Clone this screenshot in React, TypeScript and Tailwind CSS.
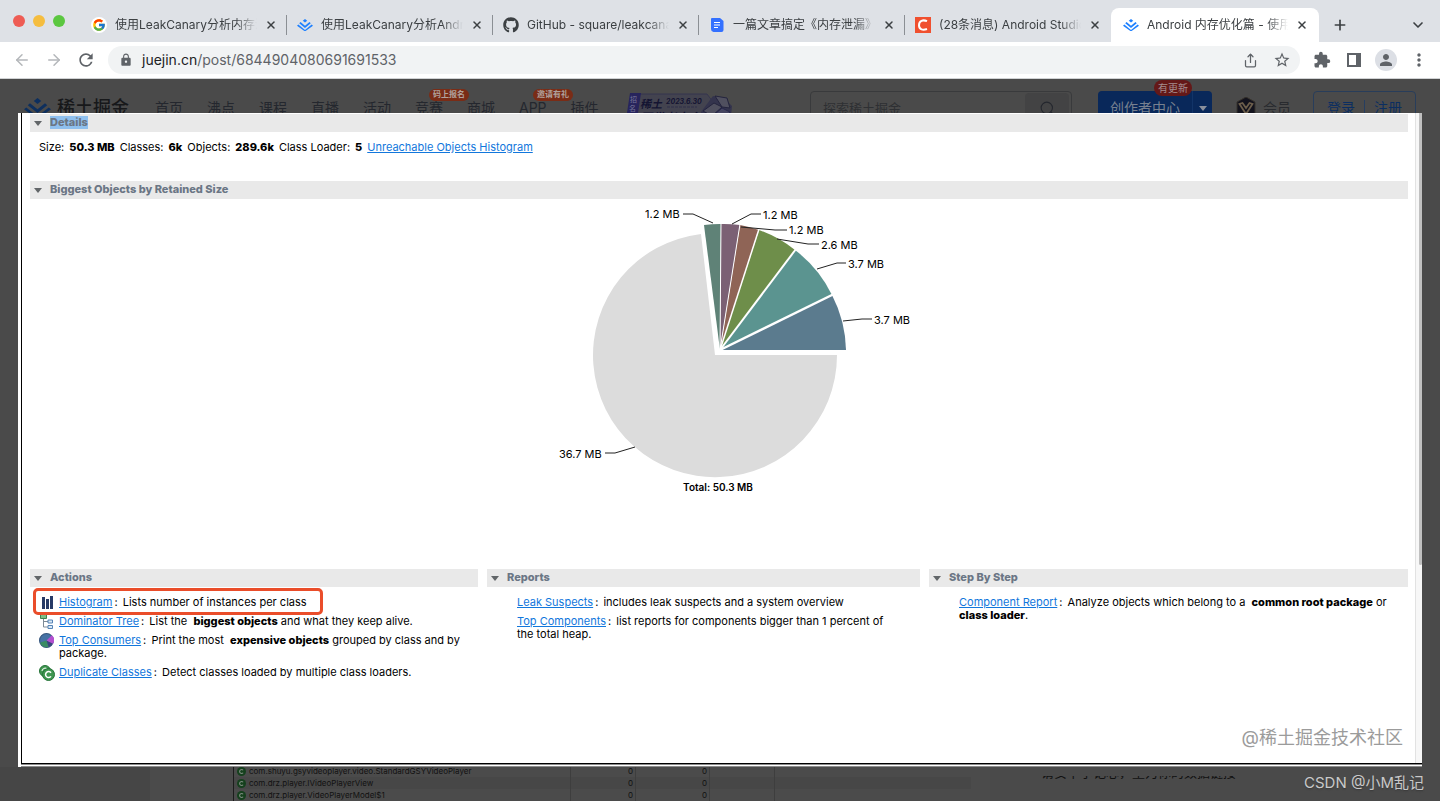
import type { ReactNode } from 'react'
import { ArrowLeft, ArrowRight, ChevronDown, Plus, Search, Share, X } from 'lucide-react'
import { FaGithub } from 'react-icons/fa'
import { FcGoogle } from 'react-icons/fc'
import { MdExtension, MdLock, MdMoreVert, MdPerson, MdRefresh, MdStarBorder } from 'react-icons/md'

function JuejinMark({ className, color }: { className: string; color: string }) {
  return (
    <svg viewBox="0 0 36 28" className={className} fill={color}>
      <path d="M18 0l5 4-5 4-5-4z" />
      <path d="M8 7l10 8 10-8 3 2.500L18 20 5 9.500z" />
      <path d="M3 12.500l15 12 15-12 3 2.500L18 28 0 15z" />
    </svg>
  )
}

function DocMark() {
  return (
    <svg viewBox="0 0 16 16" className="size-4 shrink-0">
      <path d="M3 1h8l3.500 3v9a2 2 0 0 1-2 2H4.500A3 3 0 0 1 2 12V2a1 1 0 0 1 1-1z" fill="#3370ff" />
      <path d="M5 5.500h6M5 8h6M5 10.500h4" stroke="#fff" strokeWidth="1" />
    </svg>
  )
}

function CsdnMark() {
  return (
    <svg viewBox="0 0 16 16" className="size-4 shrink-0">
      <rect width="16" height="16" fill="#f0502f" />
      <path d="M12 4.200C8 2.400 4 3.600 4 8.300c0 4.500 4 5.200 8 3.700" fill="none" stroke="#fff" strokeWidth="2" />
    </svg>
  )
}

const tabs: { title: string; icon: ReactNode; active?: boolean }[] = [
  {
    title: '使用LeakCanary分析内存泄漏',
    icon: (
      <span className="flex size-4 shrink-0 items-center justify-center rounded-full bg-white">
        <FcGoogle size={14} />
      </span>
    ),
  },
  { title: '使用LeakCanary分析Android', icon: <JuejinMark className="w-4 shrink-0" color="#1e80ff" /> },
  { title: 'GitHub - square/leakcanary', icon: <FaGithub size={16} className="shrink-0" /> },
  { title: '一篇文章搞定《内存泄漏》', icon: <DocMark /> },
  { title: '(28条消息) Android Studio', icon: <CsdnMark /> },
  {
    title: 'Android 内存优化篇 - 使用 LeakCanary',
    icon: <JuejinMark className="w-4 shrink-0" color="#1e80ff" />,
    active: true,
  },
]

function TabStrip() {
  return (
    <div className="flex h-[42px] items-end bg-[#dee1e6] text-[#3c4043]">
      <div className="flex w-[81px] shrink-0 gap-2 self-center pl-[13px]">
        <span className="size-3 rounded-full bg-[#ee5c54]" />
        <span className="size-3 rounded-full bg-[#f5bd3f]" />
        <span className="size-3 rounded-full bg-[#5bc740]" />
      </div>
      {tabs.map((tab, i) => (
        <div
          key={tab.title}
          className={
            tab.active
              ? 'flex h-[34px] min-w-0 max-w-[208px] flex-1 items-center rounded-t-lg bg-white pl-3 pr-[9px]'
              : 'flex h-[34px] min-w-0 max-w-[206px] flex-1 items-center pl-[10px]'
          }
        >
          {tab.icon}
          <span className="ml-2 min-w-0 flex-1 overflow-hidden whitespace-nowrap text-xs mask-r-from-85% mask-r-to-100%">
            {tab.title}
          </span>
          <button aria-label="Close tab" className="ml-[6px] flex size-4 shrink-0 items-center justify-center">
            <X size={12} strokeWidth={3} />
          </button>
          {i < 4 && <span className="ml-[7px] h-5 w-px bg-[#8b8f94]" />}
          {i === 4 && <span className="ml-[7px] w-px" />}
        </div>
      ))}
      <button aria-label="New tab" className="ml-[13px] mb-[9px]">
        <Plus size={16} strokeWidth={2.5} />
      </button>
      <button aria-label="Search tabs" className="ml-auto mr-[14px] mb-[9px]">
        <ChevronDown size={16} strokeWidth={2.5} />
      </button>
    </div>
  )
}

function Toolbar() {
  return (
    <div className="flex h-[37px] items-center border-b border-[#d0d2d4] bg-white pl-[13px] pr-[11px] text-[#5f6368]">
      <button aria-label="Back" className="text-[#b4b7ba]">
        <ArrowLeft size={18} />
      </button>
      <button aria-label="Forward" className="ml-[14px] text-[#b4b7ba]">
        <ArrowRight size={18} />
      </button>
      <button aria-label="Reload" className="ml-[13px]">
        <MdRefresh size={20} />
      </button>
      <div className="ml-3 flex h-7 flex-1 items-center rounded-full bg-[#f1f3f4] pl-[11px] pr-[9px]">
        <MdLock size={14} />
        <a href="https://juejin.cn/post/6844904080691691533" className="ml-[9px] flex-1 text-sm">
          <span className="text-[#202124]">juejin.cn</span>/post/6844904080691691533
        </a>
        <button aria-label="Share">
          <Share size={15} />
        </button>
        <button aria-label="Bookmark" className="ml-[15px]">
          <MdStarBorder size={18} />
        </button>
      </div>
      <button aria-label="Extensions" className="ml-[13px]">
        <MdExtension size={18} />
      </button>
      <button aria-label="Side panel" className="ml-4">
        <span className="block h-[14px] w-[14px] border-2 border-r-[5px] border-[#5f6368]" />
      </button>
      <button
        aria-label="Profile"
        className="ml-[14px] flex size-[22px] items-center justify-center rounded-full bg-[#dcdfe5]"
      >
        <MdPerson size={18} />
      </button>
      <button aria-label="Menu" className="ml-3">
        <MdMoreVert size={20} />
      </button>
    </div>
  )
}

const navItems = [
  { label: '首页' },
  { label: '沸点' },
  { label: '课程' },
  { label: '直播' },
  { label: '活动' },
  { label: '竞赛', badge: '码上报名' },
  { label: '商城' },
  { label: 'APP', badge: '邀请有礼' },
  { label: '插件' },
]

function EventBanner() {
  return (
    <svg viewBox="0 0 110 36" className="ml-[26px] h-9 w-[110px] shrink-0">
      <path d="M6 4h76l6 8v24H2z" fill="#43434f" stroke="#35354f" />
      <path d="M5 3h11l-5 33H0z" fill="#27245c" />
      <text x="5" y="12" fontSize="7" fill="#77779a">招</text>
      <text x="4" y="21" fontSize="7" fill="#77779a">名</text>
      <text x="3" y="30" fontSize="7" fill="#77779a">中</text>
      <text x="15" y="18" fontSize="11" fontWeight="700" fontStyle="italic" fill="#141432">稀土</text>
      <text x="41" y="14" fontSize="7" fontWeight="700" fontStyle="italic" fill="#141432">2023.6.30</text>
      <path d="M42 17h30" stroke="#30304a" strokeDasharray="3 1" />
      <text x="15" y="32" fontSize="12" fontWeight="700" fontStyle="italic" fill="#141432">开发者大会</text>
      <path d="M76 22l12-16 12 3 7 7-2 20H78z" fill="#34344d" />
      <path d="M78 21l11-8 8 4-10 9zM90 6l12 2 3 10-8-1z" fill="#50505f" stroke="#24243e" />
      <path d="M83 30l14-12 8 4-6 14H84z" fill="#454560" stroke="#27274b" />
    </svg>
  )
}

// Site header behind the lightbox: dimmed, and cut off where the image starts.
function SiteHeader() {
  return (
    <div className="h-[34px] overflow-hidden text-[#24272e]">
      <header className="flex h-[58px] items-center pl-[24px] pr-6 text-sm">
        <JuejinMark className="w-[27px] shrink-0" color="#0d2f5e" />
        <span className="ml-[6px] whitespace-nowrap text-[18px] leading-6 font-medium text-[#17181a]">稀土掘金</span>
        <nav className="ml-[26px] flex gap-6">
          {navItems.map((item) => (
            <a key={item.label} href="#" className="relative whitespace-nowrap">
              {item.label}
              {item.badge && (
                <span className="absolute bottom-[17px] left-[14px] flex h-3 items-center rounded-full bg-[#7a2c16] px-1 text-[8px] font-bold text-[#b0a19c]">
                  {item.badge}
                </span>
              )}
            </a>
          ))}
        </nav>
        <EventBanner />
        <div className="ml-auto flex h-[34px] w-[262px] items-center rounded border border-[#393a3c] pl-3 pr-[2px]">
          <input
            aria-label="搜索"
            placeholder="探索稀土掘金"
            className="min-w-0 flex-1 bg-transparent text-[13px] placeholder:text-[#2e3033]"
          />
          <button aria-label="搜索" className="flex h-[30px] w-11 items-center justify-center rounded bg-[#434344]">
            <Search size={17} strokeWidth={1.5} />
          </button>
        </div>
        <button className="relative ml-[26px] flex h-[34px] items-center rounded bg-[#09285a] pl-3 text-[#77808f]">
          创作者中心
          <span className="ml-3 flex h-[34px] w-5 items-center justify-center border-l border-[#123468]">
            <svg viewBox="0 0 8 5" className="w-2" fill="#8a909c">
              <path d="M0 0h8L4 5z" />
            </svg>
          </span>
          <span className="absolute bottom-[29px] left-14 flex h-4 items-center rounded-full bg-[#641818] px-1 text-[10px] text-[#a58d8d]">
            有更新
          </span>
        </button>
        <svg viewBox="0 0 20 22" className="ml-6 w-5 shrink-0">
          <path d="M10 0l9 5v12l-9 5-9-5V5z" fill="#13131d" stroke="#37322c" />
          <path d="M3.500 7l6.500 10L16.500 7l-3-1L10 11 6.500 6z" fill="none" stroke="#6c5e4b" strokeWidth="1.800" />
        </svg>
        <span className="ml-[7px] whitespace-nowrap text-[#292b2f]">会员</span>
        <div className="ml-[22px] flex h-[34px] shrink-0 items-center rounded border border-[#283d5a] px-[13px] text-[#0b2e61]">
          <a href="#">登录</a>
          <span className="mx-[9px] h-4 w-px bg-[#263e60]" />
          <a href="#">注册</a>
        </div>
      </header>
    </div>
  )
}

function SectionBar({ title, selected }: { title: string; selected?: boolean }) {
  return (
    <h2 className="flex h-[18px] items-center bg-[#e9e9e9] pb-[2px] pl-1 text-[11px] font-extrabold text-[#6b7685]">
      <svg viewBox="0 0 8 5" className="mt-[2px] w-2" fill="#626669">
        <path d="M0 0h8L4 5z" />
      </svg>
      <span className={selected ? 'ml-2 bg-[#8fc0ee] leading-[13px]' : 'ml-2 leading-[13px]'}>{title}</span>
    </h2>
  )
}

const slices = [
  { d: 'M193 150L318 150A126 126 0 0 0 304 95Z', fill: '#5b7b8e' },
  { d: 'M192 150L304 95A126 126 0 0 0 267 50Z', fill: '#5b9490' },
  { d: 'M192 150L267 50A126 126 0 0 0 231 30Z', fill: '#6e8e4a' },
  { d: 'M192 150L231 30A126 126 0 0 0 212 25Z', fill: '#8f6456' },
  { d: 'M192 150L212 25A126 126 0 0 0 193 24Z', fill: '#7b6074' },
  { d: 'M192 150L193 24A126 126 0 0 0 176 25Z', fill: '#5f8277' },
]

const gaps = [
  { d: 'M192 150L306 94', width: 2.5 },
  { d: 'M192 150L268 49', width: 2 },
  { d: 'M192 150L231 29', width: 1.5 },
  { d: 'M192 150L212 24', width: 1 },
  { d: 'M192 150L193 23', width: 1 },
]

const labels = [
  { text: '1.2 MB', x: 117, y: 18, line: '155,14 165,14 185,23' },
  { text: '1.2 MB', x: 235, y: 19, line: '204,24 223,14 233,14' },
  { text: '1.2 MB', x: 261, y: 34, line: '213,27 247,30 259,30' },
  { text: '2.6 MB', x: 293, y: 49, line: '249,39 280,44 291,44' },
  { text: '3.7 MB', x: 320, y: 68, line: '289,69 309,63 318,63' },
  { text: '3.7 MB', x: 346, y: 124, line: '315,121 334,119 344,119' },
  { text: '36.7 MB', x: 31, y: 258, line: '77,253 87,253 107,247' },
]

function RetainedPie() {
  return (
    <svg viewBox="0 0 382 300" className="mx-auto h-[300px] w-[382px] overflow-visible" fontSize="11">
      <path d="M187 155H309A122 122 0 1 1 173 34Z" fill="#dcdcdc" />
      {slices.map((s) => (
        <path key={s.d} d={s.d} fill={s.fill} />
      ))}
      {gaps.map((g) => (
        <path key={g.d} d={g.d} stroke="#fff" strokeWidth={g.width} />
      ))}
      {labels.map((l) => (
        <g key={l.line}>
          <polyline points={l.line} fill="none" stroke="#222" />
          <text x={l.x} y={l.y}>
            {l.text}
          </text>
        </g>
      ))}
      <text x="190" y="291" textAnchor="middle" fontSize="10" fontWeight="600">
        Total: 50.3 MB
      </text>
    </svg>
  )
}

function HistogramIcon() {
  return (
    <svg viewBox="0 0 14 14" className="size-[14px]" fill="#263a66">
      <path d="M3 1h3v12H3zM7 3h3v10H7zM11 0h3v13h-3z" />
    </svg>
  )
}

function TreeIcon() {
  return (
    <svg viewBox="0 0 14 14" className="size-[14px]">
      <path d="M4.500 3v9H9M4.500 6.500H9" fill="none" stroke="#7d8b96" />
      <path d="M1.500-.5h6v4h-6z" fill="#7fbd85" stroke="#3f8050" />
      <path d="M9 5h4.500v3H9zM9 10.500h4.500v3H9z" fill="#d9e8f5" stroke="#5683b5" />
    </svg>
  )
}

function ConsumersIcon() {
  return (
    <svg viewBox="0 0 14 14" className="size-[15px]">
      <circle cx="7" cy="7" r="6.500" fill="#4672a4" stroke="#38577f" />
      <path d="M7 7L1 9a6.300 6.300 0 0 0 8 4z" fill="#3a8b62" />
      <path d="M7 7l2 6a6.300 6.300 0 0 0 4-4z" fill="#39457c" />
      <path d="M7 7l6 3a6.300 6.300 0 0 0-1-8z" fill="#b44fd0" />
    </svg>
  )
}

function ClassesIcon() {
  return (
    <svg viewBox="0 0 16 16" className="size-4">
      <circle cx="6" cy="6" r="5.500" fill="#3f9650" stroke="#257338" />
      <path d="M8 4a3 3 0 0 0-5 2" fill="none" stroke="#e0f0e2" strokeWidth="1.200" />
      <circle cx="9.500" cy="9.500" r="6" fill="#3f9650" stroke="#257338" />
      <path d="M12 7.800a3 3 0 1 0 0 3.600" fill="none" stroke="#fff" strokeWidth="1.500" />
    </svg>
  )
}

function Strong({ children }: { children: ReactNode }) {
  return <b className="font-extrabold">{children}</b>
}

function Entry({ link, icon, marked, children }: { link: string; icon?: ReactNode; marked?: boolean; children: ReactNode }) {
  return (
    <li className={icon ? 'relative flex pl-[9px]' : 'relative flex pl-[10px]'}>
      <span className="flex h-[13px] w-5 shrink-0 items-center">{icon}</span>
      <p>
        <a href="#" className="text-[#1277dc] underline">
          {link}
        </a>
        <span className="mx-[2px]">:</span> {children}
      </p>
      {marked && (
        <span className="absolute -top-2 left-[3px] h-[27px] w-[290px] rounded-[5px] border-[3px] border-[#ea4d2a]" />
      )}
    </li>
  )
}

function OverviewPane() {
  return (
    <main className="mx-[18px] flex bg-white pl-[3px] text-[11px] leading-[13px] text-black">
      <div className="flex min-w-0 flex-1 flex-col border-b-[3px] border-double border-[#8c8c8c]">
        <div className="flex border-b border-l border-black">
          <div className="min-w-0 flex-1 pb-[13px] pl-2 pr-[7px] pt-px">
            <SectionBar title="Details" selected />
            <p className="flex h-[49px] gap-[5px] whitespace-pre pl-[9px] pt-[9px]">
              <span>Size:</span>
              <Strong>50.3 MB</Strong>
              <span>Classes:</span>
              <Strong>6k</Strong>
              <span>Objects:</span>
              <Strong>289.6k</Strong>
              <span>Class Loader:</span>
              <Strong>5</Strong>
              <a href="#" className="text-[#1277dc] underline">
                Unreachable Objects Histogram
              </a>
            </p>
            <SectionBar title="Biggest Objects by Retained Size" />
            <div className="pb-[69px] pt-px">
              <RetainedPie />
            </div>
            <div className="grid grid-cols-[448fr_433fr_479fr] gap-[9px]">
              <section>
                <SectionBar title="Actions" />
                <ul className="flex flex-col gap-[6px] pr-3 pt-[9px]">
                  <Entry link="Histogram" icon={<HistogramIcon />} marked>
                    Lists number of instances per class
                  </Entry>
                  <Entry link="Dominator Tree" icon={<TreeIcon />}>
                    List the &nbsp;<Strong>biggest objects</Strong> and what they keep alive.
                  </Entry>
                  <Entry link="Top Consumers" icon={<ConsumersIcon />}>
                    Print the most &nbsp;<Strong>expensive objects</Strong> grouped by class and by package.
                  </Entry>
                  <Entry link="Duplicate Classes" icon={<ClassesIcon />}>
                    Detect classes loaded by multiple class loaders.
                  </Entry>
                </ul>
              </section>
              <section>
                <SectionBar title="Reports" />
                <ul className="flex flex-col gap-[6px] pr-6 pt-[9px]">
                  <Entry link="Leak Suspects">includes leak suspects and a system overview</Entry>
                  <Entry link="Top Components">
                    list reports for components bigger than 1 percent of the total heap.
                  </Entry>
                </ul>
              </section>
              <section>
                <SectionBar title="Step By Step" />
                <ul className="flex flex-col gap-[6px] pr-3 pt-[9px]">
                  <Entry link="Component Report">
                    Analyze objects which belong to a &nbsp;<Strong>common root package</Strong> or{' '}
                    <Strong>class loader</Strong>.
                  </Entry>
                </ul>
              </section>
            </div>
            <p className="mt-[47px] pr-[5px] text-right text-lg leading-6 text-[#9b9b9b]">@稀土掘金技术社区</p>
          </div>
          <div className="w-[7px] border-l border-[#e2e2e2] bg-[#f7f7f7]">
            <div className="ml-auto h-[452px] w-[3px] rounded-b bg-[#c0c0c0]" />
          </div>
        </div>
      </div>
    </main>
  )
}

const classRows = [
  'com.shuyu.gsyvideoplayer.video.StandardGSYVideoPlayer',
  'com.drz.player.IVideoPlayerView',
  'com.drz.player.VideoPlayerModel$1',
]

function ArticleBehind() {
  return (
    <div className="flex h-[34px] overflow-hidden text-[#111]">
      <div className="flex flex-1 bg-[#4b4b4b]">
        <div className="w-[150px] shrink-0 bg-[#464646]" />
        <div className="flex-1 pl-[83px]">
          <table className="-mt-[2px] w-full max-w-[738px] table-fixed border-l border-[#1c1c1c] text-[8px] leading-3">
            <colgroup>
              <col className="w-[337px]" />
              <col className="w-[65px]" />
              <col className="w-[74px]" />
              <col className="w-[65px]" />
              <col />
            </colgroup>
            <tbody>
              {classRows.map((name) => (
                <tr key={name} className="even:bg-[#474747]">
                  <td className="border-r border-[#3e3e3e]">
                    <span className="flex h-3 items-center gap-[3px] pl-[3px]">
                      <svg viewBox="0 0 10 10" className="size-[9px] shrink-0">
                        <circle cx="5" cy="5" r="5" fill="#15401d" />
                        <path d="M6.800 3.600a2.200 2.200 0 1 0 0 2.800" fill="none" stroke="#7b8a7d" strokeWidth="1.200" />
                      </svg>
                      {name}
                    </span>
                  </td>
                  <td className="border-r border-[#3e3e3e] pr-[2px] text-right">0</td>
                  <td className="border-r border-[#3e3e3e] pr-[2px] text-right">0</td>
                  <td className="border-r border-[#3e3e3e]" />
                  <td />
                </tr>
              ))}
            </tbody>
          </table>
        </div>
      </div>
      <aside className="flex w-[450px] justify-between bg-[#4a4a4a] pl-[51px] pr-4">
        <div className="mt-[9px] flex h-[3px] items-end overflow-hidden whitespace-nowrap text-[13px] leading-[14px]">
          请安下小记心，重为你的数据链接
        </div>
        <p className="text-[15px] leading-8 text-[#c9c9c9] text-shadow-sm">CSDN @小M乱记</p>
      </aside>
    </div>
  )
}

export default function App() {
  return (
    <div className="min-h-screen bg-[#4a4a4a] font-[Inter,'Noto_Sans_CJK_SC',sans-serif]">
      <TabStrip />
      <Toolbar />
      <SiteHeader />
      <OverviewPane />
      <ArticleBehind />
    </div>
  )
}
